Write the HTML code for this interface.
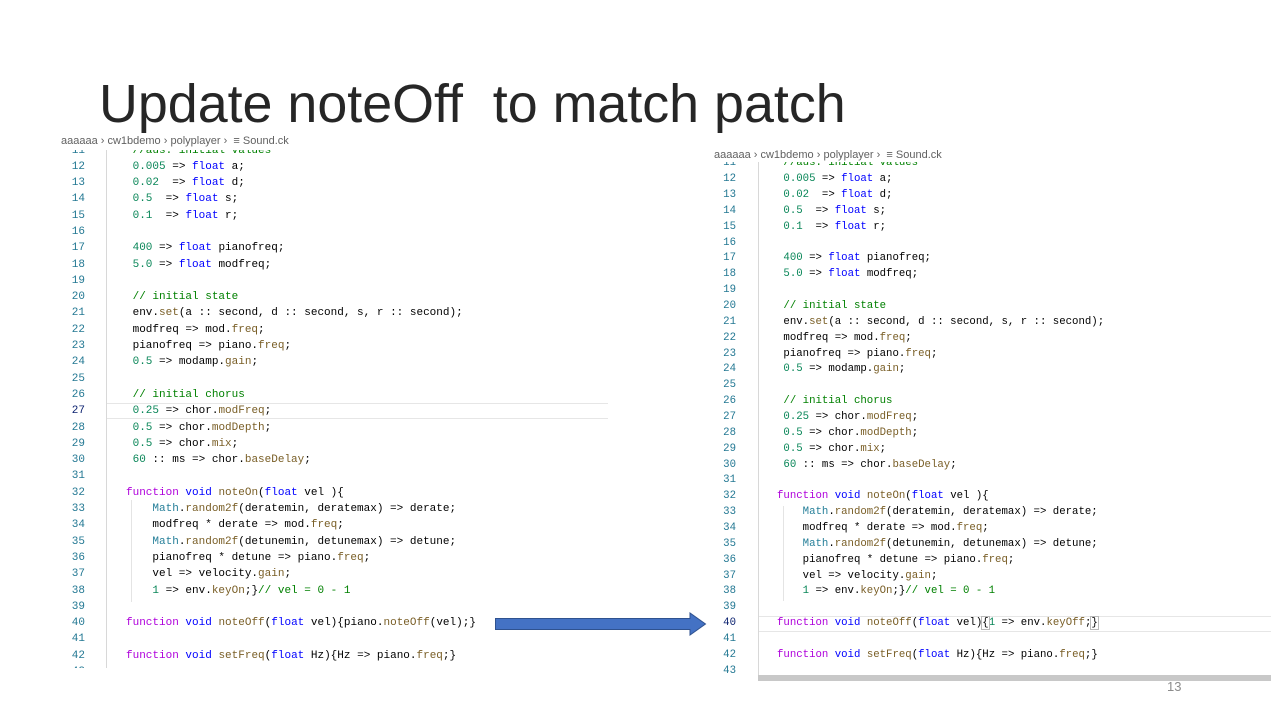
<!DOCTYPE html>
<html><head><meta charset="utf-8"><style>
body{margin:0;width:1280px;height:720px;background:#fff;position:relative;overflow:hidden;font-family:"Liberation Sans",sans-serif}
.title{position:absolute;left:99px;top:78px;font-size:53.8px;line-height:1;color:#262626;white-space:pre}
.crumb{position:absolute;font-size:11px;color:#616161;white-space:pre}
.panel{position:absolute;overflow:hidden;background:#fff}
.ln{position:absolute;text-align:right;color:#237893;font-family:"Liberation Mono",monospace}
.code{position:absolute;font-family:"Liberation Mono",monospace;color:#000}
.code div{white-space:pre}
.code div,.ln div{height:var(--lh);line-height:var(--lh)}
.n{color:#098658}.k{color:#0000ff}.f{color:#af00db}.m{color:#795e26}.t{color:#267f99}.c{color:#008000}
.gut{position:absolute;width:1px;background:#d8d8d8}
.hl{position:absolute;border-top:1px solid #e6e6e6;border-bottom:1px solid #e6e6e6}
</style></head><body>
<div class="title">Update noteOff  to match patch</div>

<div class="crumb" style="left:61px;top:135px">aaaaaa › cw1bdemo › polyplayer ›  ≡ Sound.ck</div>
<div class="crumb" style="left:714px;top:149px">aaaaaa › cw1bdemo › polyplayer ›  ≡ Sound.ck</div>

<!-- LEFT -->
<div class="panel" style="left:55px;top:150px;width:553px;height:518px;--lh:16.3px">
  <div class="hl" style="left:52px;top:253px;width:501px;height:14px"></div>
  <div class="gut" style="left:51px;top:0;height:518px"></div>
  <div class="ln" style="left:0;width:30px;top:-7.5px;font-size:11px">
<div>11</div><div>12</div><div>13</div><div>14</div><div>15</div><div>16</div><div>17</div><div>18</div><div>19</div><div>20</div><div>21</div><div>22</div><div>23</div><div>24</div><div>25</div><div>26</div><div style="color:#0b216f">27</div><div>28</div><div>29</div><div>30</div><div>31</div><div>32</div><div>33</div><div>34</div><div>35</div><div>36</div><div>37</div><div>38</div><div>39</div><div>40</div><div>41</div><div>42</div><div>43</div></div>
  <div class="gut" style="left:76px;top:350px;height:102px;background:#e4e4e4"></div>
  <div class="code" style="left:71px;top:-7.5px;font-size:11px">
<div class="c"> //aus: initial values</div>
<div> <span class="n">0.005</span> =&gt; <span class="k">float</span> a;</div>
<div> <span class="n">0.02</span>  =&gt; <span class="k">float</span> d;</div>
<div> <span class="n">0.5</span>  =&gt; <span class="k">float</span> s;</div>
<div> <span class="n">0.1</span>  =&gt; <span class="k">float</span> r;</div>
<div> </div>
<div> <span class="n">400</span> =&gt; <span class="k">float</span> pianofreq;</div>
<div> <span class="n">5.0</span> =&gt; <span class="k">float</span> modfreq;</div>
<div> </div>
<div class="c"> // initial state</div>
<div> env.<span class="m">set</span>(a :: second, d :: second, s, r :: second);</div>
<div> modfreq =&gt; mod.<span class="m">freq</span>;</div>
<div> pianofreq =&gt; piano.<span class="m">freq</span>;</div>
<div> <span class="n">0.5</span> =&gt; modamp.<span class="m">gain</span>;</div>
<div> </div>
<div class="c"> // initial chorus</div>
<div> <span class="n">0.25</span> =&gt; chor.<span class="m">modFreq</span>;</div>
<div> <span class="n">0.5</span> =&gt; chor.<span class="m">modDepth</span>;</div>
<div> <span class="n">0.5</span> =&gt; chor.<span class="m">mix</span>;</div>
<div> <span class="n">60</span> :: ms =&gt; chor.<span class="m">baseDelay</span>;</div>
<div> </div>
<div><span class="f">function</span> <span class="k">void</span> <span class="m">noteOn</span>(<span class="k">float</span> vel ){</div>
<div>    <span class="t">Math</span>.<span class="m">random2f</span>(deratemin, deratemax) =&gt; derate;</div>
<div>    modfreq * derate =&gt; mod.<span class="m">freq</span>;</div>
<div>    <span class="t">Math</span>.<span class="m">random2f</span>(detunemin, detunemax) =&gt; detune;</div>
<div>    pianofreq * detune =&gt; piano.<span class="m">freq</span>;</div>
<div>    vel =&gt; velocity.<span class="m">gain</span>;</div>
<div>    <span class="n">1</span> =&gt; env.<span class="m">keyOn</span>;}<span class="c">// vel = 0 - 1</span></div>
<div> </div>
<div><span class="f">function</span> <span class="k">void</span> <span class="m">noteOff</span>(<span class="k">float</span> vel){piano.<span class="m">noteOff</span>(vel);}</div>
<div> </div>
<div><span class="f">function</span> <span class="k">void</span> <span class="m">setFreq</span>(<span class="k">float</span> Hz){Hz =&gt; piano.<span class="m">freq</span>;}</div>
<div> </div></div>
</div>

<!-- RIGHT -->
<div class="panel" style="left:700px;top:162px;width:571px;height:520px;--lh:15.87px">
  <div class="hl" style="left:59px;top:454px;width:512px;height:14px"></div>
  <div class="gut" style="left:58px;top:0;height:514px"></div>
  <div style="position:absolute;left:58px;top:513px;width:513px;height:6px;background:#c8c8c8"></div>
  <div class="ln" style="left:0;width:36px;top:-5.8px;font-size:10.7px">
<div>11</div><div>12</div><div>13</div><div>14</div><div>15</div><div>16</div><div>17</div><div>18</div><div>19</div><div>20</div><div>21</div><div>22</div><div>23</div><div>24</div><div>25</div><div>26</div><div>27</div><div>28</div><div>29</div><div>30</div><div>31</div><div>32</div><div>33</div><div>34</div><div>35</div><div>36</div><div>37</div><div>38</div><div>39</div><div style="color:#0b216f">40</div><div>41</div><div>42</div><div>43</div></div>
  <div class="gut" style="left:83px;top:344px;height:95px;background:#e4e4e4"></div>
  <div class="code" style="left:77px;top:-5.8px;font-size:10.7px">
<div class="c"> //aus: initial values</div>
<div> <span class="n">0.005</span> =&gt; <span class="k">float</span> a;</div>
<div> <span class="n">0.02</span>  =&gt; <span class="k">float</span> d;</div>
<div> <span class="n">0.5</span>  =&gt; <span class="k">float</span> s;</div>
<div> <span class="n">0.1</span>  =&gt; <span class="k">float</span> r;</div>
<div> </div>
<div> <span class="n">400</span> =&gt; <span class="k">float</span> pianofreq;</div>
<div> <span class="n">5.0</span> =&gt; <span class="k">float</span> modfreq;</div>
<div> </div>
<div class="c"> // initial state</div>
<div> env.<span class="m">set</span>(a :: second, d :: second, s, r :: second);</div>
<div> modfreq =&gt; mod.<span class="m">freq</span>;</div>
<div> pianofreq =&gt; piano.<span class="m">freq</span>;</div>
<div> <span class="n">0.5</span> =&gt; modamp.<span class="m">gain</span>;</div>
<div> </div>
<div class="c"> // initial chorus</div>
<div> <span class="n">0.25</span> =&gt; chor.<span class="m">modFreq</span>;</div>
<div> <span class="n">0.5</span> =&gt; chor.<span class="m">modDepth</span>;</div>
<div> <span class="n">0.5</span> =&gt; chor.<span class="m">mix</span>;</div>
<div> <span class="n">60</span> :: ms =&gt; chor.<span class="m">baseDelay</span>;</div>
<div> </div>
<div><span class="f">function</span> <span class="k">void</span> <span class="m">noteOn</span>(<span class="k">float</span> vel ){</div>
<div>    <span class="t">Math</span>.<span class="m">random2f</span>(deratemin, deratemax) =&gt; derate;</div>
<div>    modfreq * derate =&gt; mod.<span class="m">freq</span>;</div>
<div>    <span class="t">Math</span>.<span class="m">random2f</span>(detunemin, detunemax) =&gt; detune;</div>
<div>    pianofreq * detune =&gt; piano.<span class="m">freq</span>;</div>
<div>    vel =&gt; velocity.<span class="m">gain</span>;</div>
<div>    <span class="n">1</span> =&gt; env.<span class="m">keyOn</span>;}<span class="c">// vel = 0 - 1</span></div>
<div> </div>
<div><span class="f">function</span> <span class="k">void</span> <span class="m">noteOff</span>(<span class="k">float</span> vel)<span style="outline:1px solid #b9b9b9">{</span><span class="n">1</span> =&gt; env.<span class="m">keyOff</span>;<span style="outline:1px solid #b9b9b9">}</span></div>
<div> </div>
<div><span class="f">function</span> <span class="k">void</span> <span class="m">setFreq</span>(<span class="k">float</span> Hz){Hz =&gt; piano.<span class="m">freq</span>;}</div>
<div> </div></div>
</div>

<!-- arrow -->
<svg style="position:absolute;left:0;top:0" width="1280" height="720">
<path d="M495.5 618.5 H690 V613 L705.5 624 L690 635 V629.5 H495.5 Z" fill="#4472c4" stroke="#2f528f" stroke-width="1"/>
</svg>
<div style="position:absolute;left:1167px;top:679px;font-size:13px;color:#8c8c8c">13</div>
</body></html>
